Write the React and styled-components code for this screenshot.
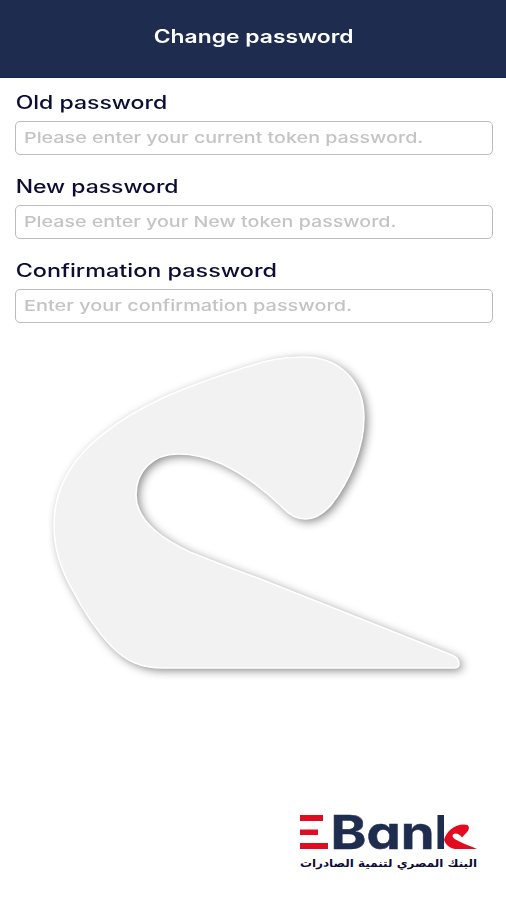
import React, { useState } from 'react';
import styled, { createGlobalStyle } from 'styled-components';

const GlobalStyle = createGlobalStyle`
  * {
    box-sizing: border-box;
  }

  body {
    margin: 0;
    background: #fff;
    font-family: Inter, 'Open Sans', sans-serif;
  }
`;

const Screen = styled.div`
  display: flex;
  flex-direction: column;
  width: 506px;
  height: 900px;
  background: #fff;
  overflow: hidden;
`;

const Header = styled.header`
  display: flex;
  justify-content: center;
  height: 78px;
  padding: 25px 0 0 2px;
  background: #1e2c50;
  border-bottom: 1px solid #16264a;
`;

const Title = styled.h1`
  margin: 0;
  color: #fff;
  font-size: 18px;
  font-weight: 600;
  line-height: 24px;
  white-space: nowrap;
  transform: scaleX(${(props) => props.$stretch});
`;

const Form = styled.form`
  display: flex;
  flex-direction: column;
  gap: 20px;
  padding: 13px 13px 0 15px;
`;

const Field = styled.div`
  display: flex;
  flex-direction: column;
  align-items: flex-start;
  gap: 6px;
`;

const Label = styled.label`
  padding-left: 0.5px;
  color: #0b0d35;
  font-size: 18px;
  font-weight: 500;
  line-height: 24px;
  white-space: nowrap;
  transform: scaleX(${(props) => props.$stretch});
  transform-origin: left;
`;

const InputBox = styled.div`
  width: 478px;
  height: 34px;
  padding: 0 8px;
  border: 1px solid #bcbcbc;
  border-radius: 5px;
  overflow: hidden;
`;

const Input = styled.input`
  display: block;
  width: 340px;
  height: 31px;
  padding: 0;
  border: none;
  outline: none;
  background: transparent;
  color: #0b0d35;
  font-family: inherit;
  font-size: 15px;
  font-weight: 500;
  transform: scaleX(${(props) => props.$stretch});
  transform-origin: left;

  &::placeholder {
    color: #c4c4c4;
    opacity: 1;
  }
`;

const Emblem = styled.svg`
  display: block;
  flex: none;
  width: 506px;
  height: 360px;
  margin-top: 17px;
`;

const Footer = styled.footer`
  display: flex;
  justify-content: flex-end;
  margin-top: 90px;
  padding-right: 22px;
`;

const Logo = styled.svg`
  display: block;
  width: 190px;
  height: 90px;
`;

const Wordmark = styled.text`
  fill: #1e2c50;
  stroke: #1e2c50;
  stroke-width: 0.5px;
  font-family: Inter, sans-serif;
  font-size: 46px;
  font-weight: 700;
  font-feature-settings: 'cv11' 1;
`;

const fields = [
  { id: 'old', label: 'Old password', hint: 'Please enter your current token password.', labelStretch: 1.28, hintStretch: 1.313 },
  { id: 'new', label: 'New password', hint: 'Please enter your New token password.', labelStretch: 1.275, hintStretch: 1.31 },
  { id: 'confirm', label: 'Confirmation password', hint: 'Enter your confirmation password.', labelStretch: 1.3, hintStretch: 1.325 },
];

const SWOOSH =
  'M243 368 C268 360 282 357 303 357 C341 357 364 382 364 418 C364 448 349 482 331 505 C315 523 297 524 281 506 C258 484 239 472 222 464 C204 456 191 454 178 454 C153 454 136 471 136 495 C136 520 160 538 190 552 C210 560 238 571 263 580 L452 655 C457 657 459 660 459 664 Q459 668 454 668 L163 668 C139 668 125 660 111 646 C97 631 84 612 73 591 C59 566 54 547 54 525 C54 486 75 456 103 434 C141 404 182 388 243 368 Z';

const App = () => {
  const [values, setValues] = useState({});

  return (
    <>
      <GlobalStyle />
      <Screen>
        <Header>
          <Title $stretch={1.27}>Change password</Title>
        </Header>

        <Form onSubmit={(e) => e.preventDefault()}>
          {fields.map((field) => (
            <Field key={field.id}>
              <Label htmlFor={field.id} $stretch={field.labelStretch}>
                {field.label}
              </Label>
              <InputBox>
                <Input
                  id={field.id}
                  type="text"
                  placeholder={field.hint}
                  $stretch={field.hintStretch}
                  value={values[field.id] || ''}
                  onChange={(e) => setValues({ ...values, [field.id]: e.target.value })}
                />
              </InputBox>
            </Field>
          ))}
        </Form>

        <Emblem viewBox="0 340 506 360">
          <defs>
            <filter id="soft" x="-10%" y="-10%" width="120%" height="120%">
              <feDropShadow dx="3" dy="2.5" stdDeviation="5" floodColor="#000" floodOpacity="0.48" />
            </filter>
          </defs>
          <path d={SWOOSH} fill="#f2f2f2" filter="url(#soft)" />
          <path d={SWOOSH} fill="#f2f2f2" stroke="#fff" strokeWidth="1.6" />
        </Emblem>

        <Footer>
          <Logo viewBox="294 790 190 90">
            <g fill="#e30b20">
              <rect x="300" y="815" width="23" height="6" />
              <rect x="300" y="829.5" width="18" height="5.5" />
              <rect x="300" y="843" width="28" height="6" />
            </g>
            <Wordmark x="330.5" y="849" textLength="104" lengthAdjust="spacingAndGlyphs">
              Ban
            </Wordmark>
            <rect x="437.5" y="815" width="6.5" height="34" fill="#1e2c50" />
            <path
              d="M444 840 C446 832 454 824.500 464 824.500 C469.500 824.500 470 828 467.500 831.500 L462 837.500 C459 833 453 832 452.500 836 C452.500 839.500 463 843 477 849 L455 849 C449.500 848 446 845 444 840 Z"
              fill="#e30b20"
            />
            <text x="477" y="867" fill="#0b0d35" fontFamily="'DejaVu Sans', sans-serif" fontSize="11" fontWeight="700" direction="rtl" textLength="177" lengthAdjust="spacingAndGlyphs">
              البنك المصري لتنمية الصادرات
            </text>
          </Logo>
        </Footer>
      </Screen>
    </>
  );
};

export default App;
